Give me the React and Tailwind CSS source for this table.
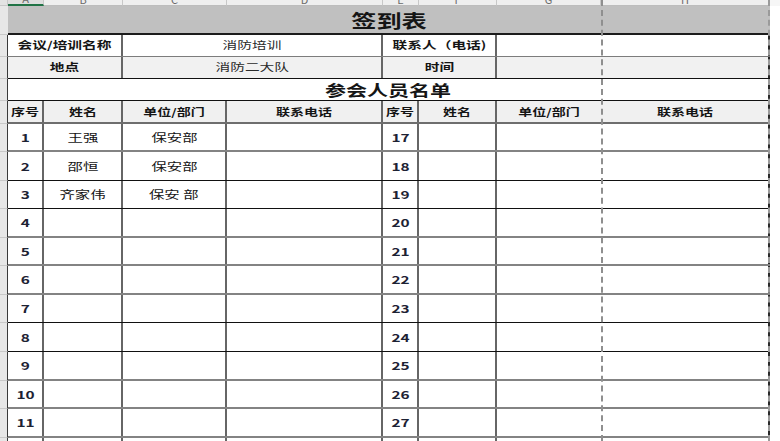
import React from "react";

const GRAY = "border-b-2 border-b-[#838383]";
const BLACK = "border-b border-b-[#111]";

const leftNames = [
  { name: "王强", dept: "保安部" },
  { name: "邵恒", dept: "保安部" },
  { name: "齐家伟", dept: "保安 部" },
];

const dataRows = [
  { h: "h-[28px]", line: GRAY },
  { h: "h-[29px]", line: BLACK },
  { h: "h-[28px]", line: BLACK },
  { h: "h-[29px]", line: GRAY },
  { h: "h-[28px]", line: GRAY },
  { h: "h-[29px]", line: GRAY },
  { h: "h-[28px]", line: BLACK },
  { h: "h-[29px]", line: BLACK },
  { h: "h-[29px]", line: GRAY },
  { h: "h-[28px]", line: GRAY },
  { h: "h-[29px]", line: GRAY },
  { h: "h-[29px]", line: GRAY },
];

function Txt({ children, className = "" }) {
  return (
    <span className={`inline-block scale-x-[1.4] whitespace-pre leading-none ${className}`}>
      {children}
    </span>
  );
}

function Cell({ w, children, edge = "inner", className = "" }) {
  const border =
    edge === "inner"
      ? "border-r-2 border-r-[#666]"
      : edge === "outer"
      ? "border-r-2 border-r-[#2a2a2a]"
      : "";
  return (
    <div className={`flex h-full shrink-0 items-center justify-center ${w} ${border} ${className}`}>
      {children}
    </div>
  );
}

function Row({ h, line, bg = "bg-white", children, edge = true }) {
  return (
    <div className={`flex w-full shrink-0 ${h}`}>
      <div
        className={`h-full w-[8px] shrink-0 border-b border-b-[#c9c9c9] bg-[#e7e7e7] ${
          edge ? "border-r border-r-[#3a3a3a]" : ""
        }`}
      />
      <div className={`flex h-full w-[762px] shrink-0 ${line} ${bg}`}>{children}</div>
      <div className="h-full flex-1 bg-white" />
    </div>
  );
}

function ColHead({ w, letter, active }) {
  return (
    <div
      className={`flex h-full shrink-0 items-end justify-center overflow-hidden border-r border-r-[#c8c8c8] ${w} ${
        active ? "border-b-2 border-b-[#217346] bg-[#dedede]" : "border-b border-b-[#bdbdbd]"
      }`}
    >
      <span className="text-[11px] leading-[12px] text-[#6a6a6a]">{letter}</span>
    </div>
  );
}

export default function App() {
  return (
    <div className="relative flex h-[441px] w-[780px] flex-col overflow-hidden bg-white font-['Noto_Sans_CJK_SC',sans-serif] text-[#151515]">
      {/* column header strip */}
      <div className="flex h-[6px] w-full shrink-0 bg-[#efefef]">
        <div className="h-full w-[8px] shrink-0 border-r border-b border-[#c8c8c8] bg-[#e3e3e3]" />
        <ColHead w="w-[36px]" letter="A" active />
        <ColHead w="w-[79px]" letter="B" />
        <ColHead w="w-[104px]" letter="C" />
        <ColHead w="w-[156px]" letter="D" />
        <ColHead w="w-[36px]" letter="E" />
        <ColHead w="w-[78px]" letter="F" />
        <ColHead w="w-[104px]" letter="G" />
        <ColHead w="w-[169px]" letter="H" />
        <div className="h-full flex-1 bg-[#f6f6f6]" />
      </div>

      {/* title */}
      <Row h="h-[29px]" line="border-b-2 border-b-[#1c1c1c]" bg="bg-[#c0c0c0]" edge={false}>
        <Cell w="w-[762px]" edge="none">
          <Txt className="text-[18px] font-bold">签到表</Txt>
        </Cell>
      </Row>

      {/* meeting info */}
      <Row h="h-[22px]" line="border-b border-b-[#7c7c7c]">
        <Cell w="w-[115px]">
          <Txt className="text-[10.5px] font-bold">会议/培训名称</Txt>
        </Cell>
        <Cell w="w-[260px]">
          <Txt className="text-[10.5px] text-[#2a2a2a]">消防培训</Txt>
        </Cell>
        <Cell w="w-[114px]">
          <Txt className="text-[10.5px] font-bold">联系人（电话)</Txt>
        </Cell>
        <Cell w="w-[273px]" edge="outer" />
      </Row>
      <Row h="h-[22px]" line={BLACK} bg="bg-[#f1f1f1]">
        <Cell w="w-[115px]">
          <Txt className="text-[10.5px] font-bold">地点</Txt>
        </Cell>
        <Cell w="w-[260px]">
          <Txt className="text-[10.5px] text-[#2a2a2a]">消防二大队</Txt>
        </Cell>
        <Cell w="w-[114px]">
          <Txt className="text-[10.5px] font-bold">时间</Txt>
        </Cell>
        <Cell w="w-[273px]" edge="outer" />
      </Row>
      <Row h="h-[22px]" line={BLACK}>
        <Cell w="w-[762px]" edge="outer">
          <Txt className="text-[15px] font-bold">参会人员名单</Txt>
        </Cell>
      </Row>

      {/* column titles */}
      <Row h="h-[23px]" line="border-b-2 border-b-[#6e6e6e]" bg="bg-[#f0f0f0]">
        <Cell w="w-[36px]">
          <Txt className="text-[10px] font-bold">序号</Txt>
        </Cell>
        <Cell w="w-[79px]">
          <Txt className="text-[10px] font-bold">姓名</Txt>
        </Cell>
        <Cell w="w-[104px]">
          <Txt className="text-[10px] font-bold">单位/部门</Txt>
        </Cell>
        <Cell w="w-[156px]">
          <Txt className="text-[10px] font-bold">联系电话</Txt>
        </Cell>
        <Cell w="w-[36px]">
          <Txt className="text-[10px] font-bold">序号</Txt>
        </Cell>
        <Cell w="w-[78px]">
          <Txt className="text-[10px] font-bold">姓名</Txt>
        </Cell>
        <Cell w="w-[104px]" edge="none">
          <Txt className="text-[10px] font-bold">单位/部门</Txt>
        </Cell>
        <Cell w="w-[169px]" edge="outer">
          <Txt className="text-[10px] font-bold">联系电话</Txt>
        </Cell>
      </Row>

      {/* attendee rows */}
      {dataRows.map((r, i) => {
        const person = leftNames[i];
        return (
          <Row key={i} h={r.h} line={r.line}>
            <Cell w="w-[36px]">
              <Txt className="text-[11px] font-bold text-[#1d2233]">{i + 1}</Txt>
            </Cell>
            <Cell w="w-[79px]">
              {person ? <Txt className="text-[11px]">{person.name}</Txt> : null}
            </Cell>
            <Cell w="w-[104px]">
              {person ? <Txt className="text-[11px]">{person.dept}</Txt> : null}
            </Cell>
            <Cell w="w-[156px]" />
            <Cell w="w-[36px]">
              <Txt className="text-[11px] font-bold text-[#1d2233]">{i + 17}</Txt>
            </Cell>
            <Cell w="w-[78px]" />
            <Cell w="w-[104px]" edge="none" />
            <Cell w="w-[169px]" edge="outer" />
          </Row>
        );
      })}

      {/* page break guides */}
      <div className="absolute top-0 bottom-0 left-[601px] w-0 border-l-2 border-dashed border-l-[#8f8f8f]" />
      <div className="absolute top-0 bottom-0 left-[768px] w-0 border-l-2 border-dashed border-l-[#9a9a9a]" />
    </div>
  );
}
